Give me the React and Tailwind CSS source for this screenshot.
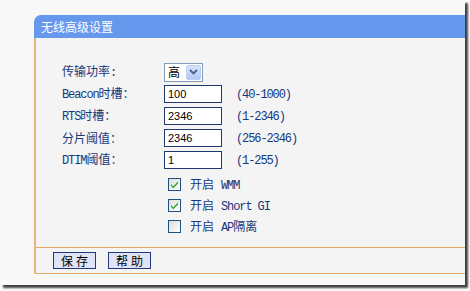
import React from "react";

const M = ({ children }) => (
  <span className="font-['Liberation_Mono',monospace] text-[12px] tracking-[-1.1px]">{children}</span>
);

const Input = ({ value }) => (
  <div className="w-[58px] h-[18px] border border-[#1f3a6e] bg-white flex items-center pl-[3px] font-['Liberation_Sans',sans-serif] text-[11px] text-black leading-none">
    {value}
  </div>
);

const Check = ({ checked }) => (
  <svg width="13" height="13" viewBox="0 0 13 13">
    <defs>
      <linearGradient id="cbg" x1="0" y1="0" x2="1" y2="1">
        <stop offset="0" stopColor="#dcdcd7" />
        <stop offset="1" stopColor="#ffffff" />
      </linearGradient>
    </defs>
    <rect x="0.5" y="0.5" width="12" height="12" fill="url(#cbg)" stroke="#1c5180" />
    {checked && (
      <path d="M3 6 L5.2 8.4 L10 3.6 L10 5.4 L5.2 10.2 L3 7.8 Z" fill="#21a121" />
    )}
  </svg>
);

const Row = ({ label, children, range }) => (
  <div className="grid grid-cols-[102px_72px_auto] h-[22px] items-center">
    <div className="text-[#16387c] leading-none whitespace-nowrap">{label}</div>
    <div>{children}</div>
    <div className="text-[#16387c] leading-none">{range && <M>{range}</M>}</div>
  </div>
);

const CheckRow = ({ checked, children }) => (
  <div className="h-[21px] flex items-center pl-[106px] gap-[9px]">
    <Check checked={checked} />
    <span className="text-[#16387c] leading-none whitespace-nowrap">
      开启<span className="ml-[7px]">{children}</span>
    </span>
  </div>
);

const Btn = ({ children }) => (
  <div className="w-[43px] h-[17px] border border-[#23387c] bg-[#dfe4f8] flex items-center justify-center text-black text-[12px] leading-none tracking-[3px] pl-[3px]">
    {children}
  </div>
);

export default function App() {
  return (
    <div className="w-[470px] h-[291px] bg-white font-['Noto_Sans_CJK_SC',sans-serif] text-[12px]">
      <div className="w-[465px] h-[285px] bg-[#f8f8f8] shadow-[3px_3px_2px_rgba(0,0,0,0.75)] pt-[15px] pl-[34px] flex flex-col">
        <div className="flex flex-col w-full">
          <div className="h-[23px] bg-[#6699ee] rounded-tl-[7px] text-white text-[12px] pl-[7px] flex items-center leading-none">
            无线高级设置
          </div>
          <div className="border-l-2 border-[#ebb47a] bg-[#f4f4f4]">
            <div className="h-[209px] pt-[23px] pl-[26px] flex flex-col">
              <Row label={<>传输功率<M>:</M></>}>
                <div className="w-[39px] h-[19px] border border-[#7f9db9] bg-white flex items-center justify-between pl-[3px] pr-[1px]">
                  <span className="text-black text-[12px] leading-none">高</span>
                  <div className="w-[15px] h-[15px] bg-gradient-to-b from-[#d6e3fd] to-[#b4c8f6] border border-[#b9cdf5] rounded-[2px] flex items-center justify-center">
                    <svg width="9" height="6" viewBox="0 0 9 6">
                      <path d="M1 1 L4.5 4.5 L8 1" fill="none" stroke="#4d6185" strokeWidth="1.8" />
                    </svg>
                  </div>
                </div>
              </Row>
              <Row label={<><M>Beacon</M>时槽：</>} range="(40-1000)">
                <Input value="100" />
              </Row>
              <Row label={<><M>RTS</M>时槽：</>} range="(1-2346)">
                <Input value="2346" />
              </Row>
              <Row label={<>分片阈值：</>} range="(256-2346)">
                <Input value="2346" />
              </Row>
              <Row label={<><M>DTIM</M>阈值：</>} range="(1-255)">
                <Input value="1" />
              </Row>
              <div className="h-[3px]" />
              <CheckRow checked><M>WMM</M></CheckRow>
              <CheckRow checked><M>Short GI</M></CheckRow>
              <CheckRow><M>AP</M>隔离</CheckRow>
            </div>
            <div className="h-[27px] border-t border-b border-[#e5a765] pt-[4px] pl-[17px] flex gap-[12px]">
              <Btn>保存</Btn>
              <Btn>帮助</Btn>
            </div>
          </div>
        </div>
      </div>
    </div>
  );
}
